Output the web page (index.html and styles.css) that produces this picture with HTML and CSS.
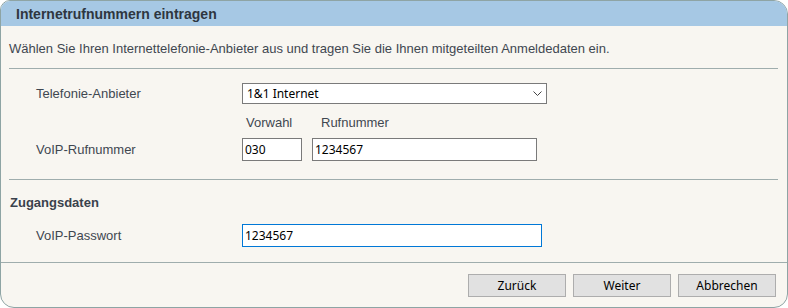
FILE: index.html
```html
<!DOCTYPE html>
<html lang="de">
<head>
    <meta charset="UTF-8">
    <title>Internetrufnummern eintragen</title>
    <link rel="stylesheet" href="styles.css">
</head>
<body>

    <div class="dialog">
        <!-- Title bar -->
        <h2 class="dialog-head">Internetrufnummern eintragen</h2>

        <div class="dialog-body">
            <p class="intro">Wählen Sie Ihren Internettelefonie-Anbieter aus und tragen Sie die Ihnen mitgeteilten Anmeldedaten ein.</p>
            <hr>

            <div class="row row-provider">
                <label class="row-label">Telefonie-Anbieter</label>
                <div class="select">
                    <span>1&amp;1 Internet</span>
                    <svg width="9" height="5" viewBox="0 0 9 5"><path d="M0.5 0.5 L4.5 4.5 L8.5 0.5" fill="none" stroke="#444" stroke-width="1"/></svg>
                </div>
            </div>

            <div class="row row-captions">
                <span></span>
                <div class="captions">
                    <span class="cap-vorwahl">Vorwahl</span>
                    <span class="cap-nummer">Rufnummer</span>
                </div>
            </div>

            <div class="row row-number">
                <label class="row-label">VoIP-Rufnummer</label>
                <div class="inputs">
                    <input class="field field-vorwahl" value="030">
                    <input class="field field-nummer" value="1234567">
                </div>
            </div>

            <hr class="hr-section">

            <h3 class="section">Zugangsdaten</h3>

            <div class="row row-password">
                <label class="row-label">VoIP-Passwort</label>
                <input class="field field-password focused" value="1234567">
            </div>
        </div>

        <!-- Buttons -->
        <div class="dialog-foot">
            <button class="btn">Zurück</button>
            <button class="btn">Weiter</button>
            <button class="btn">Abbrechen</button>
        </div>
    </div>

</body>
</html>
```

FILE: styles.css
```css
body {
    margin: 0;
    font-family: "Liberation Sans", Arial, sans-serif;
    font-size: 13px;
    color: #3f4750;
    background: #ffffff;
}

.dialog {
    width: 788px;
    height: 308px;
    box-sizing: border-box;
    border: 1px solid #8ea4a4;
    border-radius: 10px 14px 14px 14px;
    background: #f8f6f1;
    overflow: hidden;
    display: flex;
    flex-direction: column;
}

.dialog-head {
    margin: 0;
    height: 25px;
    padding-left: 15px;
    background: #a6c8e4;
    font-size: 14px;
    font-weight: bold;
    line-height: 27px;
    color: #2e3640;
}

.dialog-body {
    flex: 1;
    padding: 0 9px 0 8px;
}

.intro {
    margin: 15px 0 0;
    line-height: 16px;
}

hr {
    border: none;
    border-top: 1px solid #9fadad;
    margin: 11px 0 0;
}

.hr-section {
    margin-top: 18px;
}

/* Form rows: label column and control column */
.row {
    display: grid;
    grid-template-columns: 206px 1fr;
    align-items: center;
    margin-left: 27px;
}

.row-provider {
    margin-top: 14px;
}

.row-captions {
    margin-top: 11px;
}

.row-number {
    margin-top: 7px;
}

.row-password {
    margin-top: 13px;
}

.select {
    width: 305px;
    height: 21px;
    box-sizing: border-box;
    border: 1px solid #7a7a7a;
    background: #ffffff;
    display: flex;
    align-items: center;
    justify-content: space-between;
    padding: 0 4px 0 4px;
    font-family: "Noto Sans", sans-serif;
    font-size: 12px;
    color: #000000;
}

.captions {
    display: flex;
    line-height: 16px;
}

.cap-vorwahl {
    width: 75px;
    padding-left: 4px;
}

.inputs {
    display: flex;
    gap: 10px;
}

.field {
    box-sizing: border-box;
    height: 23px;
    margin: 0;
    border: 1px solid #7a7a7a;
    background: #ffffff;
    padding: 0 2px;
    font-family: "Noto Sans", sans-serif;
    font-size: 12px;
    color: #000000;
    outline: none;
}

.field-vorwahl {
    width: 60px;
}

.field-nummer {
    width: 225px;
}

.field-password {
    width: 300px;
}

.focused {
    border-color: #0078d7;
}

.section {
    margin: 15px 0 0 1px;
    font-size: 13px;
    font-weight: bold;
    line-height: 16px;
    color: #3a424c;
}

.dialog-foot {
    height: 45px;
    box-sizing: border-box;
    border-top: 1px solid #9fadad;
    display: flex;
    justify-content: flex-end;
    align-items: flex-start;
    gap: 7px;
    padding: 11px 11px 0 0;
}

.btn {
    width: 98px;
    height: 23px;
    margin: 0;
    border: 1px solid #adadad;
    background: #e1e1e1;
    font-family: "Noto Sans", sans-serif;
    font-size: 12px;
    color: #000000;
    padding: 0;
}
```
